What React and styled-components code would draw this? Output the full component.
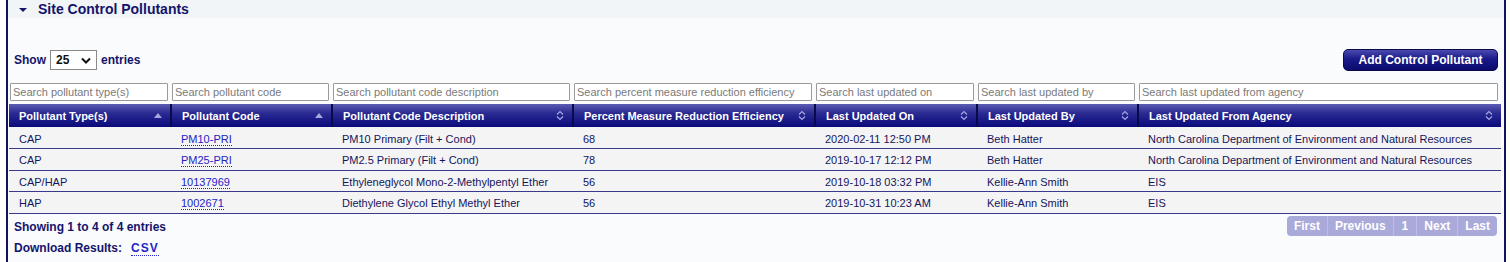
import React from "react";
import styled, { createGlobalStyle } from "styled-components";

const Global = createGlobalStyle`
  html, body { margin: 0; padding: 0; background: #ffffff; }
  body { font-family: "Liberation Sans", Arial, sans-serif; }
  * { box-sizing: border-box; }
`;

const Panel = styled.section`
  margin: 0 4px 0 6px;
  height: 262px;
  border-left: 2px solid #14145e;
  border-right: 2px solid #14145e;
  background: #fafbfc;
`;

const TitleBar = styled.div`
  height: 18px;
  display: flex;
  align-items: center;
  gap: 11px;
  padding-left: 11px;
  background: #f2f5f8;
  color: #14146b;
  font-weight: bold;
  font-size: 14px;
`;

const Caret = styled.span`
  width: 0;
  height: 0;
  border-left: 4px solid transparent;
  border-right: 4px solid transparent;
  border-top: 4px solid #14146b;
  margin-top: 1px;
`;

const Body = styled.div`
  padding: 31px 3px 0 1px;
`;

const TopRow = styled.div`
  display: flex;
  align-items: center;
  justify-content: space-between;
  height: 22px;
  padding-left: 5px;
  margin-bottom: 12px;
`;

const Length = styled.label`
  display: flex;
  align-items: center;
  gap: 4px;
  font-size: 12px;
  font-weight: bold;
  color: #14146b;
`;

const Select = styled.div`
  width: 47px;
  height: 20px;
  border: 1px solid #8a8a8a;
  background: #fff;
  display: flex;
  align-items: center;
  justify-content: space-between;
  padding: 0 5px 0 5px;
  font-size: 12px;
  font-weight: bold;
  color: #111;
`;

const AddButton = styled.button`
  height: 22px;
  width: 155px;
  border: 1px solid #0a0a4a;
  border-radius: 5px;
  background: linear-gradient(#4a4ab0, #1a1a8a 45%, #0a0a6e);
  color: #fff;
  font-family: inherit;
  font-size: 12px;
  font-weight: bold;
  padding: 0;
  margin-right: 3px;
`;

const Table = styled.table`
  width: 1492px;
  table-layout: fixed;
  border-collapse: collapse;
  font-size: 11px;
`;

const SearchCell = styled.td`
  padding: 0 3px 3px 1px;
`;

const SearchInput = styled.input`
  width: 100%;
  height: 18px;
  border: 1px solid #9a9a9a;
  border-radius: 1px;
  background: #fff;
  font-family: inherit;
  font-size: 11px;
  padding: 0 2px;
  &::placeholder { color: #7a7a7a; }
`;

const Th = styled.th`
  height: 23px;
  text-align: left;
  color: #fff;
  font-weight: bold;
  font-size: 11px;
  padding: 0 0 0 10px;
  background: linear-gradient(#5c5cb4, #2a2a92 40%, #0a0a7c);
  border-left: 2px solid #0a0a48;
  &:first-child { border-left: 0; }
`;

const ThInner = styled.div`
  display: flex;
  align-items: center;
  justify-content: space-between;
  padding-right: 8px;
`;

const Tr = styled.tr`
  background: #f4f4f4;
  border-bottom: 1px solid #3a3a8c;
`;

const Td = styled.td`
  height: 21.5px;
  padding: 2px 0 0 10px;
  color: #15155e;
  white-space: nowrap;
  overflow: hidden;
`;

const CodeLink = styled.a`
  color: #2323c8;
  text-decoration: none;
  border-bottom: 1px dotted #2323c8;
`;

const Footer = styled.div`
  display: flex;
  justify-content: space-between;
  align-items: flex-start;
  padding: 2px 0 0 5px;
`;

const FooterLeft = styled.div`
  display: flex;
  flex-direction: column;
  gap: 7px;
  padding-top: 4px;
  font-size: 12px;
  font-weight: bold;
  color: #14146b;
`;

const Download = styled.div`
  display: flex;
  gap: 9px;
`;

const CsvLink = styled.a`
  color: #2323c8;
  letter-spacing: 1px;
  text-decoration: none;
  border-bottom: 1px dotted #2323c8;
`;

const Pager = styled.div`
  display: flex;
  height: 20px;
  border-radius: 4px;
  background: #a9a9da;
  overflow: hidden;
  margin-right: 4px;
`;

const PageItem = styled.span`
  display: flex;
  align-items: center;
  padding: 0 ${p => p.$pad || 7}px;
  color: #fff;
  font-size: 12px;
  font-weight: bold;
  border-left: 1px solid #bcbce4;
  &:first-child { border-left: 0; }
`;

const SortUp = () => (
  <svg width="8" height="5" viewBox="0 0 8 5">
    <path d="M0 5 L4 0 L8 5 Z" fill="#a6a6e0" />
  </svg>
);

const SortBoth = () => (
  <svg width="8" height="11" viewBox="0 0 8 11">
    <path d="M1 4.5 L4 1.5 L7 4.5" fill="none" stroke="#a6a6e0" strokeWidth="1.2" />
    <path d="M1 6.5 L4 9.5 L7 6.5" fill="none" stroke="#a6a6e0" strokeWidth="1.2" />
  </svg>
);

const Chevron = () => (
  <svg width="10" height="7" viewBox="0 0 10 7">
    <path d="M1 1.5 L5 5.5 L9 1.5" fill="none" stroke="#111" strokeWidth="2" />
  </svg>
);

const columns = [
  { label: "Pollutant Type(s)", search: "Search pollutant type(s)", w: 162, sort: "asc" },
  { label: "Pollutant Code", search: "Search pollutant code", w: 161, sort: "asc" },
  { label: "Pollutant Code Description", search: "Search pollutant code description", w: 241 },
  { label: "Percent Measure Reduction Efficiency", search: "Search percent measure reduction efficiency", w: 242 },
  { label: "Last Updated On", search: "Search last updated on", w: 162 },
  { label: "Last Updated By", search: "Search last updated by", w: 161 },
  { label: "Last Updated From Agency", search: "Search last updated from agency", w: 363 },
];

const rows = [
  ["CAP", "PM10-PRI", "PM10 Primary (Filt + Cond)", "68", "2020-02-11 12:50 PM", "Beth Hatter", "North Carolina Department of Environment and Natural Resources"],
  ["CAP", "PM25-PRI", "PM2.5 Primary (Filt + Cond)", "78", "2019-10-17 12:12 PM", "Beth Hatter", "North Carolina Department of Environment and Natural Resources"],
  ["CAP/HAP", "10137969", "Ethyleneglycol Mono-2-Methylpentyl Ether", "56", "2019-10-18 03:32 PM", "Kellie-Ann Smith", "EIS"],
  ["HAP", "1002671", "Diethylene Glycol Ethyl Methyl Ether", "56", "2019-10-31 10:23 AM", "Kellie-Ann Smith", "EIS"],
];

export default function App() {
  return (
    <>
      <Global />
      <Panel>
        <TitleBar>
          <Caret />
          Site Control Pollutants
        </TitleBar>
        <Body>
          <TopRow>
            <Length>
              Show
              <Select>
                25
                <Chevron />
              </Select>
              entries
            </Length>
            <AddButton>Add Control Pollutant</AddButton>
          </TopRow>
          <Table>
            <colgroup>
              {columns.map(c => (
                <col key={c.label} style={{ width: c.w }} />
              ))}
            </colgroup>
            <thead>
              <tr>
                {columns.map(c => (
                  <SearchCell key={c.label}>
                    <SearchInput placeholder={c.search} />
                  </SearchCell>
                ))}
              </tr>
              <tr>
                {columns.map(c => (
                  <Th key={c.label}>
                    <ThInner>
                      {c.label}
                      {c.sort === "asc" ? <SortUp /> : <SortBoth />}
                    </ThInner>
                  </Th>
                ))}
              </tr>
            </thead>
            <tbody>
              {rows.map((r, i) => (
                <Tr key={i}>
                  {r.map((v, j) => (
                    <Td key={j}>{j === 1 ? <CodeLink href="#">{v}</CodeLink> : v}</Td>
                  ))}
                </Tr>
              ))}
            </tbody>
          </Table>
          <Footer>
            <FooterLeft>
              <span>Showing 1 to 4 of 4 entries</span>
              <Download>
                Download Results:
                <CsvLink href="#">CSV</CsvLink>
              </Download>
            </FooterLeft>
            <Pager>
              <PageItem>First</PageItem>
              <PageItem>Previous</PageItem>
              <PageItem $pad={8}>1</PageItem>
              <PageItem>Next</PageItem>
              <PageItem>Last</PageItem>
            </Pager>
          </Footer>
        </Body>
      </Panel>
    </>
  );
}
